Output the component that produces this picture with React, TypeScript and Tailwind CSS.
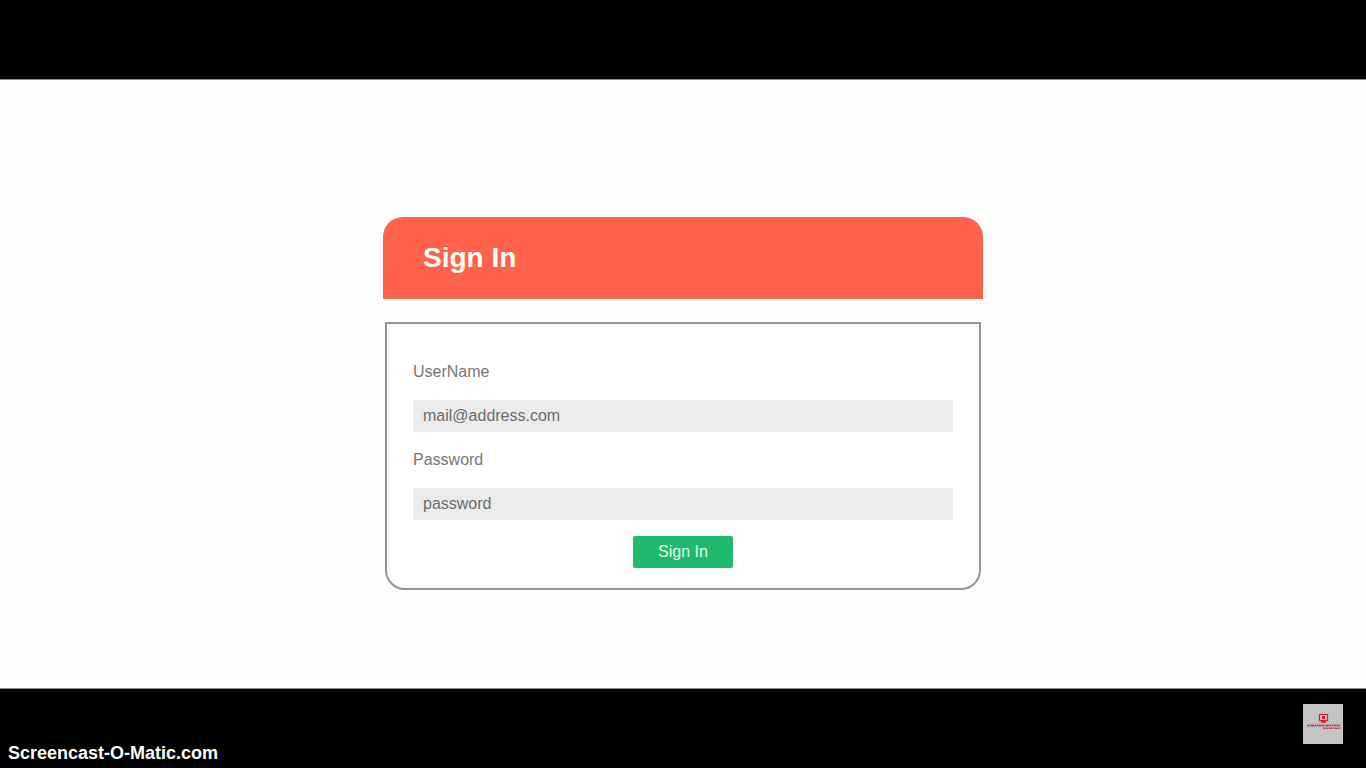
import React from "react";

type FieldProps = {
  id: string;
  label: string;
  type: string;
  placeholder: string;
};

function Field({ id, label, type, placeholder }: FieldProps) {
  return (
    <div className="flex flex-col gap-4">
      <label htmlFor={id} className="text-base leading-6 text-[#767876]">
        {label}
      </label>
      <input
        id={id}
        type={type}
        placeholder={placeholder}
        className="h-8 w-full rounded-xs bg-[#ebeceb] px-2.5 text-base text-[#686a68] outline-none placeholder:text-[#6c6e6c]"
      />
    </div>
  );
}

function ChannelLogo() {
  return (
    <svg viewBox="0 0 40 40" className="size-10" role="img" aria-label="Channel logo">
      <rect width="40" height="40" fill="#c4c4c4" />
      <rect x="16.5" y="10.5" width="8" height="6" fill="#dcc4c4" stroke="#d3202b" strokeWidth="1.2" />
      <rect x="19" y="12" width="3" height="3" fill="#d3202b" />
      <path d="M19 17h3l1.5 1.8h-6z" fill="#d3202b" />
      <path d="M4 21.5h34" stroke="#bd2a62" strokeWidth="1.6" strokeDasharray="2 0.5 1 0.5 3 0.5" />
      <path d="M6 20.2h31M5 23h15" stroke="#c980a0" strokeWidth="0.7" strokeDasharray="1 1" />
      <path d="M20 24.3h18" stroke="#cf4a50" strokeWidth="1.4" strokeDasharray="3 0.5 2 0.5" />
    </svg>
  );
}

export default function App() {
  return (
    <div className="flex min-h-screen flex-col bg-black font-['Liberation_Sans',Arial,sans-serif]">
      <div className="h-20 shrink-0 border-b border-[#8c8c8c]" />
      <main className="flex flex-1 flex-col items-center justify-center bg-[#fdfffd] px-4 pt-[39px]">
        <div className="flex w-full max-w-[600px] flex-col gap-[23px]">
          <header className="rounded-t-[20px] bg-[#ff624d] px-10 py-5">
            <h1 className="text-[28px] leading-[42px] font-bold text-[#fffcf0]">Sign In</h1>
          </header>
          <form
            onSubmit={(e) => e.preventDefault()}
            className="mx-0.5 flex flex-col gap-4 rounded-b-[20px] border-2 border-[#969696] bg-[#fefffe] px-[26px] pt-9 pb-5"
          >
            <Field id="username" label="UserName" type="text" placeholder="mail@address.com" />
            <Field id="password" label="Password" type="password" placeholder="password" />
            <button
              type="submit"
              className="h-8 w-[100px] self-center rounded-xs bg-[#1fb970] text-base text-[#e6fbea]"
            >
              Sign In
            </button>
          </form>
        </div>
      </main>
      <footer className="flex h-20 shrink-0 items-end justify-between border-t border-[#8c8c8c] pr-[23px] pl-2">
        <p className="pb-[3px] text-lg leading-6 font-bold text-white">Screencast-O-Matic.com</p>
        <div className="pb-6">
          <ChannelLogo />
        </div>
      </footer>
    </div>
  );
}
